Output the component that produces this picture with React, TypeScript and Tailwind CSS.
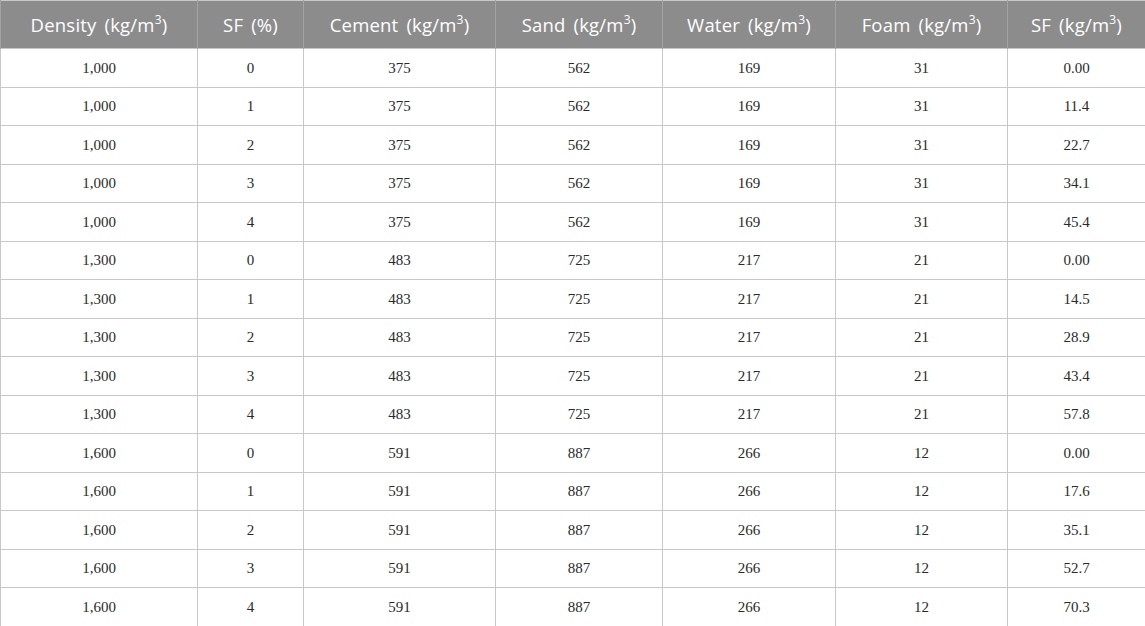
import React from 'react';

const widths = [197, 106, 192, 167, 173, 172, 138];

const headers: { label: string; unit: boolean }[] = [
  { label: 'Density', unit: true },
  { label: 'SF (%)', unit: false },
  { label: 'Cement', unit: true },
  { label: 'Sand', unit: true },
  { label: 'Water', unit: true },
  { label: 'Foam', unit: true },
  { label: 'SF', unit: true },
];

const groups = [
  { density: '1,000', cement: 375, sand: 562, water: 169, foam: 31, sf: ['0.00', '11.4', '22.7', '34.1', '45.4'] },
  { density: '1,300', cement: 483, sand: 725, water: 217, foam: 21, sf: ['0.00', '14.5', '28.9', '43.4', '57.8'] },
  { density: '1,600', cement: 591, sand: 887, water: 266, foam: 12, sf: ['0.00', '17.6', '35.1', '52.7', '70.3'] },
];

const rows = groups.flatMap((g) =>
  g.sf.map((s, i) => [g.density, String(i), String(g.cement), String(g.sand), String(g.water), String(g.foam), s])
);

export default function App() {
  return (
    <div className="w-[1145px] h-[626px] bg-white overflow-hidden">
      <table className="w-[1145px] table-fixed border-collapse border border-[#c8c8c8]">
        <colgroup>
          {widths.map((w, i) => (
            <col key={i} style={{ width: w }} />
          ))}
        </colgroup>
        <thead>
          <tr className="h-[48px] bg-[#8c8c8c]">
            {headers.map((h, i) => (
              <th
                key={i}
                className="border-x border-[#a3a3a3] text-center align-middle font-normal text-white text-[18.5px] tracking-[0.2px] [word-spacing:3px] font-['Open_Sans',sans-serif]"
              >
                {h.unit ? (
                  <>
                    {h.label} (kg/m<sup className="text-[12px] top-[-0.6em]">3</sup>)
                  </>
                ) : (
                  h.label
                )}
              </th>
            ))}
          </tr>
        </thead>
        <tbody>
          {rows.map((r, ri) => (
            <tr key={ri} className="h-[38.5px]">
              {r.map((c, ci) => (
                <td
                  key={ci}
                  className="border border-[#c8c8c8] text-center align-middle text-[15px] text-[#2a2a2a] font-['Liberation_Serif',serif]"
                >
                  {c}
                </td>
              ))}
            </tr>
          ))}
        </tbody>
      </table>
    </div>
  );
}
